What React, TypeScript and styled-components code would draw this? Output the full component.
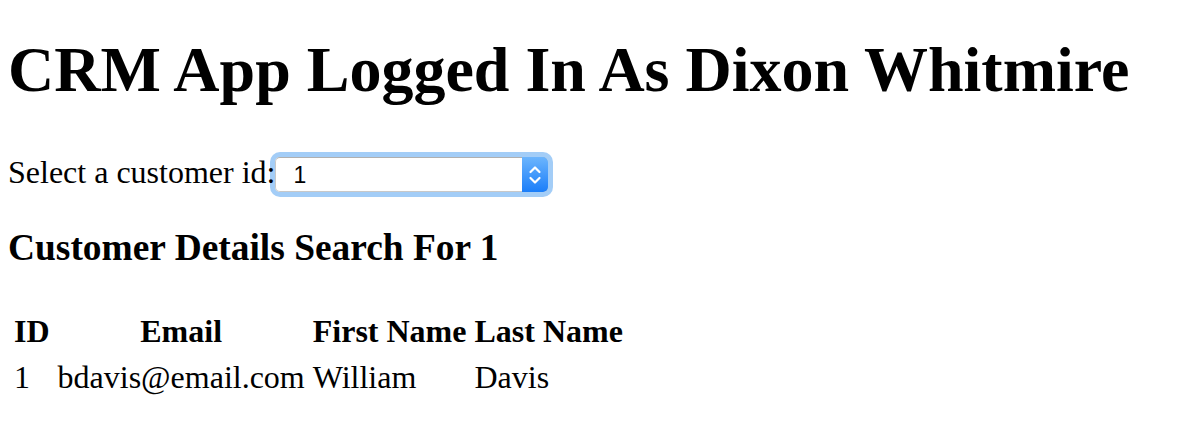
import React from "react";
import styled, { createGlobalStyle } from "styled-components";

const GlobalStyle = createGlobalStyle`
  html, body {
    margin: 0;
    padding: 0;
    background: #ffffff;
  }
  body {
    padding: 0 8px;
    font-family: "Liberation Serif", "Times New Roman", serif;
    font-size: 32px;
    color: #000;
  }
`;

const Page = styled.div`
  display: flex;
  flex-direction: column;
  align-items: flex-start;
  padding-top: 33px;
`;

const Title = styled.h1`
  margin: 0 0 45px;
  font-size: 64px;
  line-height: 74px;
  font-weight: bold;
  white-space: nowrap;
`;

const PickerRow = styled.div`
  display: flex;
  align-items: center;
  height: 45px;
`;

const Label = styled.label`
  position: relative;
  z-index: 1;
  line-height: 37px;
  margin-bottom: 4px;
  white-space: nowrap;
`;

const SelectWrap = styled.div`
  position: relative;
  flex: none;
  width: 273px;
  height: 35px;
  border-radius: 5px;
  box-shadow: 0 0 0 5px #a3cdf7;
`;

const NativeSelect = styled.select`
  appearance: none;
  -webkit-appearance: none;
  display: block;
  width: 100%;
  height: 35px;
  box-sizing: border-box;
  margin: 0;
  padding: 0 30px 0 17px;
  border: 1px solid #c8c8c8;
  border-top-color: #b0b0b0;
  border-radius: 5px;
  background: #ffffff;
  font-family: "Liberation Sans", Arial, sans-serif;
  font-size: 23px;
  color: #000;
  outline: none;
`;

const Stepper = styled.span`
  position: absolute;
  top: 0;
  right: 0;
  width: 26px;
  height: 35px;
  border-radius: 0 5px 5px 0;
  background: linear-gradient(#6cb5fd, #1b7ef9);
  display: flex;
  align-items: center;
  justify-content: center;
  pointer-events: none;
`;

const SubTitle = styled.h3`
  margin: 29px 0 37px;
  font-size: 37.44px;
  line-height: 43px;
  font-weight: bold;
  white-space: nowrap;
`;

const Table = styled.table`
  border-collapse: separate;
  border-spacing: 4px;
  margin-left: 0;
  font-size: 32px;
`;

const HeadCell = styled.th`
  padding: 2px;
  line-height: 38px;
  font-weight: bold;
  text-align: center;
  white-space: nowrap;
`;

const Cell = styled.td`
  padding: 2px;
  line-height: 38px;
  text-align: left;
  white-space: nowrap;
`;

const customers = [
  { id: 1, email: "bdavis@email.com", first: "William", last: "Davis" },
];

export default function App() {
  return (
    <>
      <GlobalStyle />
      <Page>
        <Title>CRM App Logged In As Dixon Whitmire</Title>
        <PickerRow>
          <Label htmlFor="cust">Select a customer id:</Label>
          <SelectWrap>
            <NativeSelect id="cust" defaultValue="1">
              <option value="1">1</option>
              <option value="2">2</option>
              <option value="3">3</option>
            </NativeSelect>
            <Stepper>
              <svg width="14" height="26" viewBox="0 0 14 26" fill="none">
                <path d="M2.5 10 L7 5.5 L11.5 10" stroke="#fff" strokeWidth="2.2" strokeLinecap="round" strokeLinejoin="round" />
                <path d="M2.5 16 L7 20.5 L11.5 16" stroke="#fff" strokeWidth="2.2" strokeLinecap="round" strokeLinejoin="round" />
              </svg>
            </Stepper>
          </SelectWrap>
        </PickerRow>
        <SubTitle>Customer Details Search For 1</SubTitle>
        <Table>
          <thead>
            <tr>
              <HeadCell>ID</HeadCell>
              <HeadCell>Email</HeadCell>
              <HeadCell>First Name</HeadCell>
              <HeadCell>Last Name</HeadCell>
            </tr>
          </thead>
          <tbody>
            {customers.map((c) => (
              <tr key={c.id}>
                <Cell>{c.id}</Cell>
                <Cell>{c.email}</Cell>
                <Cell>{c.first}</Cell>
                <Cell>{c.last}</Cell>
              </tr>
            ))}
          </tbody>
        </Table>
      </Page>
    </>
  );
}
